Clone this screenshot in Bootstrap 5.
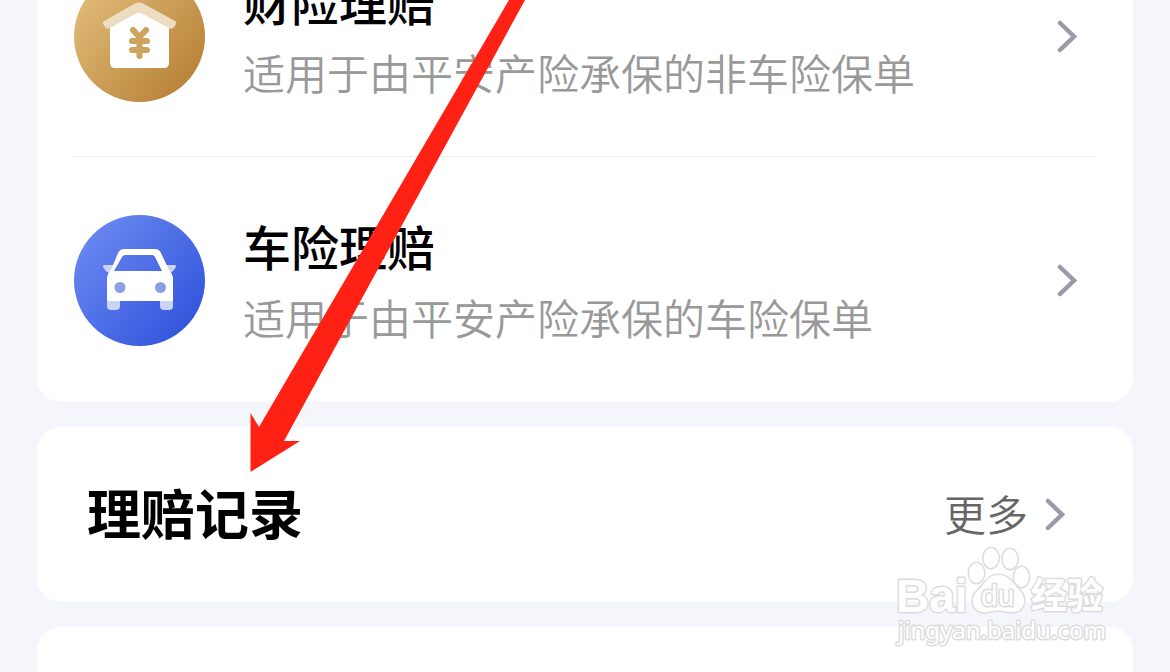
<!DOCTYPE html>
<html lang="zh-CN">
<head>
<meta charset="utf-8">
<meta name="viewport" content="width=device-width, initial-scale=1">
<title>理赔记录</title>
<link href="https://cdn.jsdelivr.net/npm/bootstrap@5.3.0/dist/css/bootstrap.min.css" rel="stylesheet">
<style>
  body { background: #f5f6fb; font-family: "Noto Sans CJK SC", sans-serif; }
  .screen { height: 100vh; }
  /* the list is scrolled part of the way up */
  .feed { padding: 0 37px; gap: 25px; margin-top: -88px; }
  .panel { border-radius: 24px; }
  .claim-list { padding: 0 39px 2px 37px; }
  .claim-row { min-height: 244px; gap: 38px; padding: 4px 17px 0 0; }
  .claim-row + .claim-row { border-top: 1px solid #efefef; }
  .claim-icon { width: 131px; height: 131px; }
  .claim-title { font-size: 48px; line-height: 72px; font-weight: 500; color: #000; }
  .claim-note { font-size: 42px; line-height: 72px; font-weight: 350; color: #999; }
  .record-bar { min-height: 175px; padding: 0 68px 0 50px; }
  .record-title { font-size: 54px; line-height: 72px; font-weight: 700; color: #000; padding-bottom: 6px; }
  .more-link { font-size: 42px; line-height: 72px; font-weight: 350; color: #666; gap: 17px; }
  .more-label { padding-bottom: 4px; }
  .chevron { width: 20px; height: 33px; }
  .pointer-arrow { top: 0; left: 250px; pointer-events: none; }
  .site-mark { right: 61px; bottom: 22px; pointer-events: none; }
</style>
</head>
<body>
<div class="screen position-relative overflow-hidden">
  <main class="feed d-flex flex-column">
    <section class="panel claim-list bg-white">
      <a href="#property" class="claim-row d-flex align-items-center text-decoration-none">
        <svg class="claim-icon flex-shrink-0" viewBox="0 0 131 131" aria-hidden="true">
          <defs><linearGradient id="gold" x1="0.1" y1="0.15" x2="0.9" y2="0.85"><stop offset="0" stop-color="#dfbb77"/><stop offset="1" stop-color="#b98238"/></linearGradient></defs>
          <circle cx="65.500" cy="65.500" r="65.500" fill="url(#gold)"/>
          <path d="M36 54L65 39l30 15v38q0 5-5 5H41q-5 0-5-5Z" fill="#fff"/>
          <path d="M29 53q-1-2 1-3L60 33q5-3 10 0l31 17q2 1 1 3l-2 3q-2 3-5 1L69 43q-4-2-8 0L36 57q-3 2-5-1Z" fill="#ecdcc0"/>
          <g fill="none" stroke="#cfa35c" stroke-width="6" stroke-linecap="round"><path d="M59 59l6.500 7 6.500-7M58 70h15M58 79h15M65.500 67v18"/></g>
        </svg>
        <div class="flex-grow-1">
          <div class="claim-title">财险理赔</div>
          <div class="claim-note">适用于由平安产险承保的非车险保单</div>
        </div>
        <svg class="chevron flex-shrink-0" viewBox="0 0 20 33" aria-hidden="true"><path d="M3 3l14 13.500L3 30" fill="none" stroke="#9a9ba8" stroke-width="4.500" stroke-linecap="round"/></svg>
      </a>
      <a href="#car" class="claim-row d-flex align-items-center text-decoration-none">
        <svg class="claim-icon flex-shrink-0" viewBox="0 0 131 131" aria-hidden="true">
          <defs><linearGradient id="blue" x1="0.1" y1="0.15" x2="0.9" y2="0.85"><stop offset="0" stop-color="#6887f0"/><stop offset="1" stop-color="#3355dc"/></linearGradient></defs>
          <circle cx="65.500" cy="65.500" r="65.500" fill="url(#blue)"/>
          <path d="M30 50h10v8h-5q-4-2-6-6 0-2 1-2ZM101 50H91v8h5q4-2 6-6 0-2-1-2ZM33 82h13v9q0 4-4 4h-5q-4 0-4-4ZM86 82h13v9q0 4-4 4h-5q-4 0-4-4Z" fill="#cbd3f6"/>
          <path fill-rule="evenodd" d="M50 34h31q4 0 6 4l8 17q4 4 4 9v22H33V64q0-5 4-9l7-17q2-4 6-4ZM51 40q-2 0-3 2l-8 14h48l-7-14q-1-2-3-2Z" fill="#fff"/>
          <circle cx="46" cy="72.500" r="5.500" fill="#8b9fe5"/><circle cx="86.500" cy="72.500" r="5.500" fill="#8b9fe5"/>
        </svg>
        <div class="flex-grow-1">
          <div class="claim-title">车险理赔</div>
          <div class="claim-note">适用于由平安产险承保的车险保单</div>
        </div>
        <svg class="chevron flex-shrink-0" viewBox="0 0 20 33" aria-hidden="true"><path d="M3 3l14 13.500L3 30" fill="none" stroke="#9a9ba8" stroke-width="4.500" stroke-linecap="round"/></svg>
      </a>
    </section>

    <section class="panel record-bar bg-white d-flex align-items-center justify-content-between">
      <h1 class="record-title m-0">理赔记录</h1>
      <a href="#records" class="more-link d-flex align-items-center text-decoration-none">
        <span class="more-label">更多</span>
        <svg class="chevron" viewBox="0 0 20 33" aria-hidden="true"><path d="M3 3l14 13.500L3 30" fill="none" stroke="#9a9ba8" stroke-width="4.500" stroke-linecap="round"/></svg>
      </a>
    </section>

    <section class="panel record-bar bg-white"></section>
  </main>

  <svg class="pointer-arrow position-absolute" width="280" height="474" viewBox="250 0 280 474" aria-hidden="true">
    <path d="M509 0H525L284 441H300L250.500 472V413L259 427Z" fill="#ff2113"/>
  </svg>

  <svg class="site-mark position-absolute" width="216" height="106" viewBox="893 544 216 106" role="img" aria-label="Baidu 经验">
    <g fill="#fff" stroke="#dcdcde" stroke-width="3" paint-order="stroke" stroke-linejoin="round">
      <ellipse cx="976.500" cy="573" rx="7.500" ry="10"/>
      <ellipse cx="991" cy="558" rx="7.500" ry="10"/>
      <ellipse cx="1010" cy="559" rx="7.500" ry="10"/>
      <ellipse cx="1021.500" cy="577" rx="7.500" ry="10"/>
      <path d="M998 575c-7 0-11 4-15 10-5 6-10 8-10 16 0 9 7 12 14 11 8-2 15-2 22 0 8 1 15-2 15-11 0-8-5-11-9-16-5-6-9-10-17-10Z"/>
      <text x="896" y="612" font-family="Liberation Sans, sans-serif" font-weight="700" font-size="46">Bai</text>
      <text x="981" y="606" font-family="Liberation Sans, sans-serif" font-weight="400" font-size="30">du</text>
      <text x="1031" y="609" font-family="Noto Sans CJK SC, sans-serif" font-weight="700" font-size="36">经验</text>
      <text x="898" y="639" font-family="Noto Sans, sans-serif" font-size="24">jingyan.baidu.com</text>
    </g>
  </svg>
</div>
<script src="https://cdn.jsdelivr.net/npm/bootstrap@5.3.0/dist/js/bootstrap.bundle.min.js"></script>
</body>
</html>
